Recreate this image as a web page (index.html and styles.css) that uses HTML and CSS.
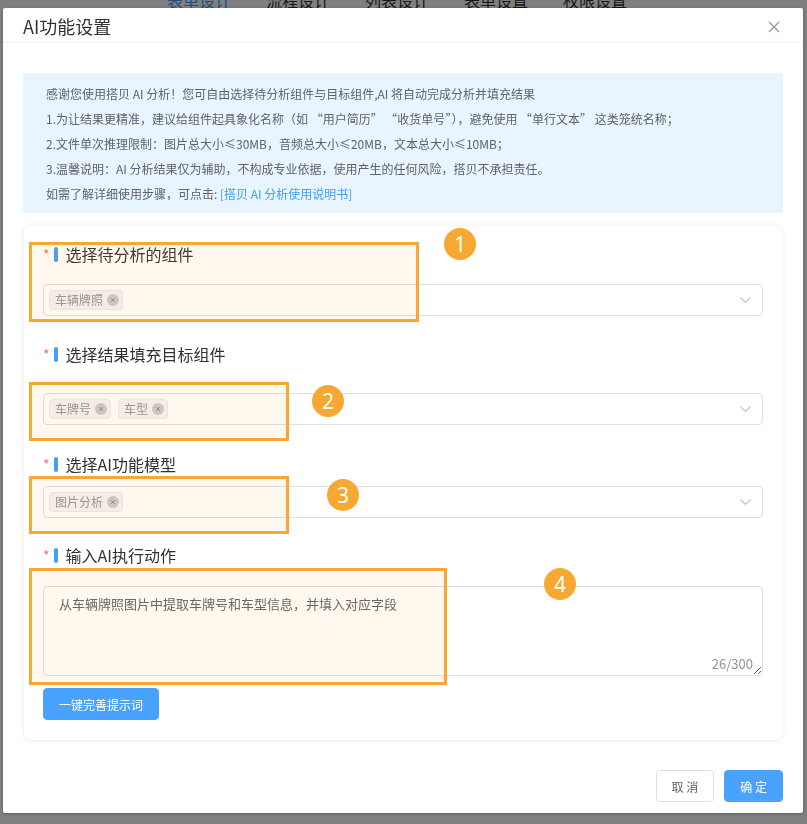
FILE: index.html
```html
<!DOCTYPE html>
<html lang="zh-CN">
<head>
    <meta charset="UTF-8">
    <meta name="viewport" content="width=device-width, initial-scale=1.0">
    <title>AI功能设置</title>
    <link rel="stylesheet" href="styles.css">
</head>
<body>
    <div class="page">
        <nav class="top-nav">
            <span class="active">表单设计</span>
            <span>流程设计</span>
            <span>列表设计</span>
            <span>表单设置</span>
            <span>权限设置</span>
        </nav>
    </div>

    <div class="mask">
        <div class="dialog">
            <header class="dialog-header">
                <span class="dialog-title">AI功能设置</span>
                <button class="dialog-close" type="button">
                    <svg width="12" height="12" viewBox="0 0 12 12"><path d="M1 1L11 11M11 1L1 11" stroke="#909399" stroke-width="1.2" fill="none"/></svg>
                </button>
            </header>

            <div class="dialog-body">
                <div class="notice">
                    <p>感谢您使用搭贝 AI 分析！您可自由选择待分析组件与目标组件,AI 将自动完成分析并填充结果</p>
                    <p>1.为让结果更精准，建议给组件起具象化名称（如 “用户简历” “收货单号”），避免使用 “单行文本” 这类笼统名称；</p>
                    <p>2.文件单次推理限制：图片总大小≤30MB，音频总大小≤20MB，文本总大小≤10MB；</p>
                    <p>3.温馨说明：AI 分析结果仅为辅助，不构成专业依据，使用产生的任何风险，搭贝不承担责任。</p>
                    <p>如需了解详细使用步骤，可点击: <a href="#">[搭贝 AI 分析使用说明书]</a></p>
                </div>

                <form class="ai-card">
                    <div class="field">
                        <div class="field-label"><span class="required">*</span><span class="bar"></span>选择待分析的组件</div>
                        <div class="select">
                            <div class="tags">
                                <span class="tag">车辆牌照<i class="tag-close"><svg width="6" height="6" viewBox="0 0 6 6"><path d="M1 1L5 5M5 1L1 5" stroke="#8e9096" stroke-width="1"/></svg></i></span>
                            </div>
                            <svg class="arrow" width="11" height="6" viewBox="0 0 11 6"><path d="M0.5 0.5L5.5 5.5L10.5 0.5" stroke="#c0c4cc" stroke-width="1.1" fill="none"/></svg>
                        </div>
                    </div>

                    <div class="field target">
                        <div class="field-label"><span class="required">*</span><span class="bar"></span>选择结果填充目标组件</div>
                        <div class="select">
                            <div class="tags">
                                <span class="tag">车牌号<i class="tag-close"><svg width="6" height="6" viewBox="0 0 6 6"><path d="M1 1L5 5M5 1L1 5" stroke="#8e9096" stroke-width="1"/></svg></i></span>
                                <span class="tag">车型<i class="tag-close"><svg width="6" height="6" viewBox="0 0 6 6"><path d="M1 1L5 5M5 1L1 5" stroke="#8e9096" stroke-width="1"/></svg></i></span>
                            </div>
                            <svg class="arrow" width="11" height="6" viewBox="0 0 11 6"><path d="M0.5 0.5L5.5 5.5L10.5 0.5" stroke="#c0c4cc" stroke-width="1.1" fill="none"/></svg>
                        </div>
                    </div>

                    <div class="field model">
                        <div class="field-label"><span class="required">*</span><span class="bar"></span>选择AI功能模型</div>
                        <div class="select">
                            <div class="tags">
                                <span class="tag">图片分析<i class="tag-close"><svg width="6" height="6" viewBox="0 0 6 6"><path d="M1 1L5 5M5 1L1 5" stroke="#8e9096" stroke-width="1"/></svg></i></span>
                            </div>
                            <svg class="arrow" width="11" height="6" viewBox="0 0 11 6"><path d="M0.5 0.5L5.5 5.5L10.5 0.5" stroke="#c0c4cc" stroke-width="1.1" fill="none"/></svg>
                        </div>
                    </div>

                    <div class="field action">
                        <div class="field-label"><span class="required">*</span><span class="bar"></span>输入AI执行动作</div>
                        <div class="textarea-wrap">
                            <textarea class="textarea">从车辆牌照图片中提取车牌号和车型信息，并填入对应字段</textarea>
                            <span class="counter">26/300</span>
                        </div>
                        <button class="btn btn-primary btn-improve" type="button">一键完善提示词</button>
                    </div>

                    <!-- annotation marks -->
                    <div class="mark mark-1"></div>
                    <div class="mark mark-2"></div>
                    <div class="mark mark-3"></div>
                    <div class="mark mark-4"></div>
                    <span class="badge badge-1">1</span>
                    <span class="badge badge-2">2</span>
                    <span class="badge badge-3">3</span>
                    <span class="badge badge-4">4</span>
                </form>
            </div>

            <footer class="dialog-footer">
                <button class="btn btn-default" type="button">取 消</button>
                <button class="btn btn-primary" type="button">确 定</button>
            </footer>
        </div>
    </div>
</body>
</html>
```

FILE: styles.css
```css
body {
    margin: 0;
    font-family: "Noto Sans CJK SC", "Noto Sans", sans-serif;
    color: #303133;
    background: #ffffff;
}
.page {
    height: 100vh;
    overflow: hidden;
}
.top-nav {
    display: flex;
    gap: 35px;
    padding-left: 167px;
    height: 0;
    line-height: 0;
    font-size: 16px;
    color: #303133;
}
.top-nav .active {
    color: #409eff;
}
.mask {
    position: fixed;
    inset: 0;
    background: rgba(0, 0, 0, 0.5);
    overflow: hidden;
}
.dialog {
    width: 800px;
    margin: 8px 4px 0 3px;
    background: #ffffff;
    border-radius: 2px;
    box-shadow: 0 1px 3px rgba(0, 0, 0, 0.3);
}
.dialog-header {
    display: flex;
    align-items: center;
    justify-content: space-between;
    padding: 6px 23px 4px 20px;
    border-bottom: 1px solid #ebeef5;
}
.dialog-title {
    font-size: 18px;
    line-height: 24px;
    color: #303133;
}
.dialog-close {
    border: none;
    background: none;
    padding: 0;
    margin-top: 2px;
    display: flex;
    cursor: pointer;
}
.dialog-body {
    padding: 30px 20px 0;
}
.notice {
    background: #e8f4fe;
    border-radius: 2px;
    padding: 8px 23px 7px;
    font-size: 12px;
    line-height: 25px;
    color: #606266;
}
.notice p {
    margin: 0;
}
.notice a {
    color: #409eff;
    text-decoration: none;
}
.ai-card {
    position: relative;
    margin: 12px 0 0;
    padding: 16px 19px 20px;
    border: 1px solid #f3f4f6;
    border-radius: 6px;
    box-shadow: 0 0 6px rgba(0, 0, 0, 0.04);
}
.field {
    margin-top: 26px;
}
.field:first-child {
    margin-top: 0;
}
.field.model {
    margin-top: 27px;
}
.field.action {
    margin-top: 25px;
}
.field-label {
    display: flex;
    align-items: center;
    height: 24px;
    font-size: 16px;
    color: #303133;
    margin-bottom: 18px;
}
.field.target .field-label {
    margin-bottom: 27px;
}
.field.model .field-label {
    margin-bottom: 10px;
}
.field.action .field-label {
    margin-bottom: 19px;
}
.required {
    color: #f56c6c;
    font-size: 14px;
    margin-right: 4px;
}
.bar {
    width: 4px;
    height: 15px;
    border-radius: 2px;
    background: #409eff;
    margin-right: 8px;
}
.select {
    height: 32px;
    box-sizing: border-box;
    border: 1px solid #dcdfe6;
    border-radius: 4px;
    display: flex;
    align-items: center;
    justify-content: space-between;
    padding: 0 11px 0 5px;
}
.tags {
    display: flex;
    gap: 7px;
}
.tag {
    display: inline-flex;
    align-items: center;
    height: 20px;
    box-sizing: border-box;
    padding: 0 3px 0 5px;
    border: 1px solid #e9e9eb;
    border-radius: 4px;
    background: #f4f4f5;
    color: #909399;
    font-size: 12px;
    line-height: 18px;
}
.tag-close {
    display: inline-flex;
    align-items: center;
    justify-content: center;
    width: 12px;
    height: 12px;
    margin-left: 4px;
    border-radius: 50%;
    background: #c8c9cc;
}
.textarea-wrap {
    position: relative;
}
.textarea {
    display: block;
    width: 100%;
    height: 90px;
    box-sizing: border-box;
    border: 1px solid #dcdfe6;
    border-radius: 4px;
    padding: 7px 15px;
    font-family: inherit;
    font-size: 13px;
    line-height: 20px;
    color: #606266;
    resize: vertical;
    outline: none;
}
.counter {
    position: absolute;
    right: 10px;
    bottom: 4px;
    font-size: 13px;
    line-height: 16px;
    color: #909399;
    background: #ffffff;
}
.btn {
    height: 32px;
    padding: 0 15px;
    border-radius: 4px;
    font-family: inherit;
    font-size: 12px;
    cursor: pointer;
}
.btn-primary {
    border: 1px solid #49a2fd;
    background: #49a2fd;
    color: #ffffff;
}
.btn-default {
    border: 1px solid #dcdfe6;
    background: #ffffff;
    color: #606266;
}
.btn-improve {
    margin-top: 12px;
}
.dialog-footer {
    display: flex;
    justify-content: flex-end;
    gap: 10px;
    padding: 29px 20px 11px;
}
.mark {
    position: absolute;
    left: 5px;
    box-sizing: border-box;
    border: 3px solid #f6a832;
    background: rgba(247, 168, 50, 0.08);
    pointer-events: none;
}
.mark-1 { top: 16px; width: 390px; height: 80px; }
.mark-2 { top: 156px; width: 260px; height: 59px; }
.mark-3 { top: 250px; width: 260px; height: 58px; }
.mark-4 { top: 342px; width: 418px; height: 117px; }
.badge {
    position: absolute;
    width: 32px;
    height: 32px;
    border-radius: 50%;
    background: #f6a832;
    color: #ffffff;
    font-family: "Noto Sans", sans-serif;
    font-size: 21px;
    line-height: 32px;
    text-align: center;
}
.badge-1 { left: 420px; top: 2px; }
.badge-2 { left: 288px; top: 159px; }
.badge-3 { left: 303px; top: 253px; }
.badge-4 { left: 520px; top: 342px; }
```
